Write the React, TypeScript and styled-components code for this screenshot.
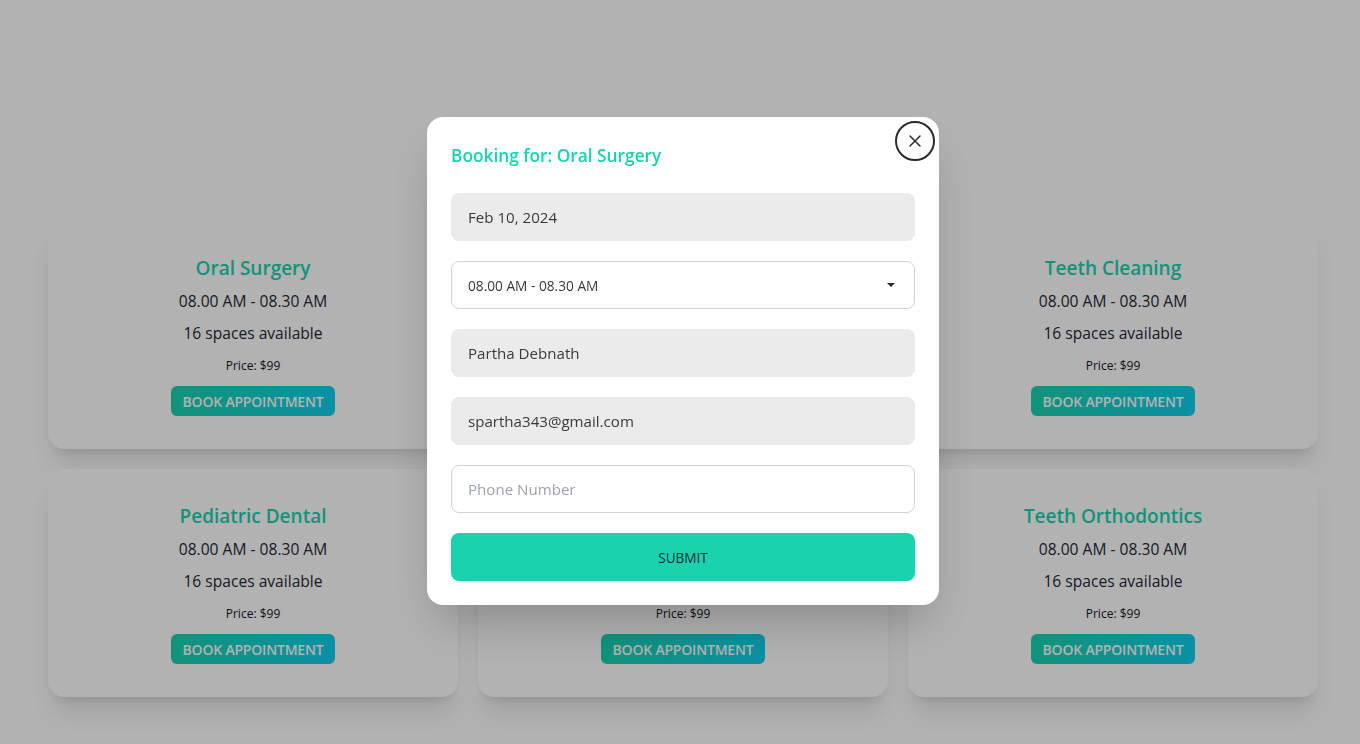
import styled, { createGlobalStyle } from "styled-components";

const GlobalStyle = createGlobalStyle`
  * { box-sizing: border-box; }
  html, body { margin: 0; padding: 0; background: #ffffff; }
  body {
    font-family: "Open Sans", "Noto Sans", sans-serif;
    color: #1f2937;
    overflow: hidden;
  }
`;

const Page = styled.main`
  width: 1360px;
  height: 744px;
  padding: 221px 42px 0 48px;
`;

const CardGrid = styled.section`
  display: grid;
  grid-template-columns: repeat(3, 410px);
  column-gap: 20px;
  row-gap: 20px;
`;

const Card = styled.article`
  height: 228px;
  background: #ffffff;
  border-radius: 16px;
  box-shadow: 0 20px 25px -5px rgba(0, 0, 0, 0.1), 0 8px 10px -6px rgba(0, 0, 0, 0.1);
  padding: 33px 32px 32px;
  display: flex;
  flex-direction: column;
  align-items: center;
  text-align: center;
`;

const CardTitle = styled.h2`
  margin: 0;
  font-size: 19px;
  line-height: 28px;
  font-weight: 600;
  color: #19d3ae;
`;

const CardLine = styled.p<{ $gap: number }>`
  margin: ${({ $gap }) => $gap}px 0 0;
  font-size: 15.6px;
  line-height: 28px;
  color: #1f2937;
`;

const Price = styled.p`
  margin: 7px 0 0;
  font-size: 12px;
  line-height: 24px;
  color: #111827;
`;

const BookButton = styled.button`
  margin-top: 8px;
  height: 30px;
  padding: 0 12px;
  border: none;
  border-radius: 6px;
  background: linear-gradient(90deg, #19d3ae 0%, #0fcfec 100%);
  color: #ffffff;
  font-family: inherit;
  font-size: 14px;
  font-weight: 600;
  letter-spacing: -0.2px;
  text-transform: uppercase;
`;

const Overlay = styled.div`
  position: fixed;
  inset: 0;
  background: rgba(0, 0, 0, 0.3);
  display: flex;
  justify-content: center;
  align-items: flex-start;
  padding: 117px 0 0 6px;
`;

const Modal = styled.div`
  position: relative;
  width: 512px;
  background: #ffffff;
  border-radius: 16px;
  padding: 24px;
  box-shadow: 0 25px 50px -12px rgba(0, 0, 0, 0.25);
`;

const CloseButton = styled.button`
  position: absolute;
  top: 4px;
  right: 4px;
  width: 40px;
  height: 40px;
  border-radius: 50%;
  border: 2px solid #2b2b2b;
  background: #ffffff;
  display: flex;
  align-items: center;
  justify-content: center;
  padding: 0;
  color: #2b2b2b;
`;

const ModalTitle = styled.h3`
  margin: 3px 0 0;
  font-size: 17.3px;
  line-height: 24px;
  font-weight: 600;
  color: #19d3ae;
`;

const Form = styled.form`
  margin-top: 25px;
  display: flex;
  flex-direction: column;
  gap: 20px;
`;

const Field = styled.input<{ $filled?: boolean }>`
  width: 100%;
  height: 48px;
  border-radius: 8px;
  border: 1px solid ${({ $filled }) => ($filled ? "#ebebeb" : "#d4d4d4")};
  background: ${({ $filled }) => ($filled ? "#ebebeb" : "#ffffff")};
  padding: 0 16px;
  font-family: inherit;
  font-size: 15.1px;
  color: #3a3a3a;
  outline: none;
  &::placeholder { color: #9ca3af; }
`;

const SelectWrap = styled.div`
  position: relative;
`;

const Select = styled.select`
  width: 100%;
  height: 48px;
  border-radius: 8px;
  border: 1px solid #d4d4d4;
  background: #ffffff;
  padding: 0 16px;
  font-family: inherit;
  font-size: 13.7px;
  color: #3a3a3a;
  appearance: none;
  outline: none;
`;

const Caret = styled.span`
  position: absolute;
  right: 20px;
  top: 22px;
  width: 0;
  height: 0;
  border-left: 4px solid transparent;
  border-right: 4px solid transparent;
  border-top: 4px solid #2b2b2b;
  pointer-events: none;
`;

const Submit = styled.button`
  height: 48px;
  border: none;
  border-radius: 8px;
  background: #19d3ae;
  color: #1f2937;
  font-family: inherit;
  font-size: 13.6px;
  text-transform: uppercase;
`;

const services = [
  "Oral Surgery",
  "Cosmetic Dentistry",
  "Teeth Cleaning",
  "Pediatric Dental",
  "Cavity Protection",
  "Teeth Orthodontics",
];

export default function App() {
  return (
    <>
      <GlobalStyle />
      <Page>
        <CardGrid>
          {services.map((name) => (
            <Card key={name}>
              <CardTitle>{name}</CardTitle>
              <CardLine $gap={5}>08.00 AM - 08.30 AM</CardLine>
              <CardLine $gap={4}>16 spaces available</CardLine>
              <Price>Price: $99</Price>
              <BookButton>Book Appointment</BookButton>
            </Card>
          ))}
        </CardGrid>
      </Page>
      <Overlay>
        <Modal>
          <CloseButton aria-label="close">
            <svg width="14" height="14" viewBox="0 0 14 14" fill="none">
              <path d="M2 2 L12 12 M12 2 L2 12" stroke="currentColor" strokeWidth="1.5" strokeLinecap="round" />
            </svg>
          </CloseButton>
          <ModalTitle>Booking for: Oral Surgery</ModalTitle>
          <Form onSubmit={(e) => e.preventDefault()}>
            <Field $filled disabled value="Feb 10, 2024" readOnly />
            <SelectWrap>
              <Select defaultValue="08.00 AM - 08.30 AM">
                <option>08.00 AM - 08.30 AM</option>
              </Select>
              <Caret />
            </SelectWrap>
            <Field $filled disabled value="Partha Debnath" readOnly />
            <Field $filled disabled value="spartha343@gmail.com" readOnly />
            <Field placeholder="Phone Number" />
            <Submit type="submit">Submit</Submit>
          </Form>
        </Modal>
      </Overlay>
    </>
  );
}
